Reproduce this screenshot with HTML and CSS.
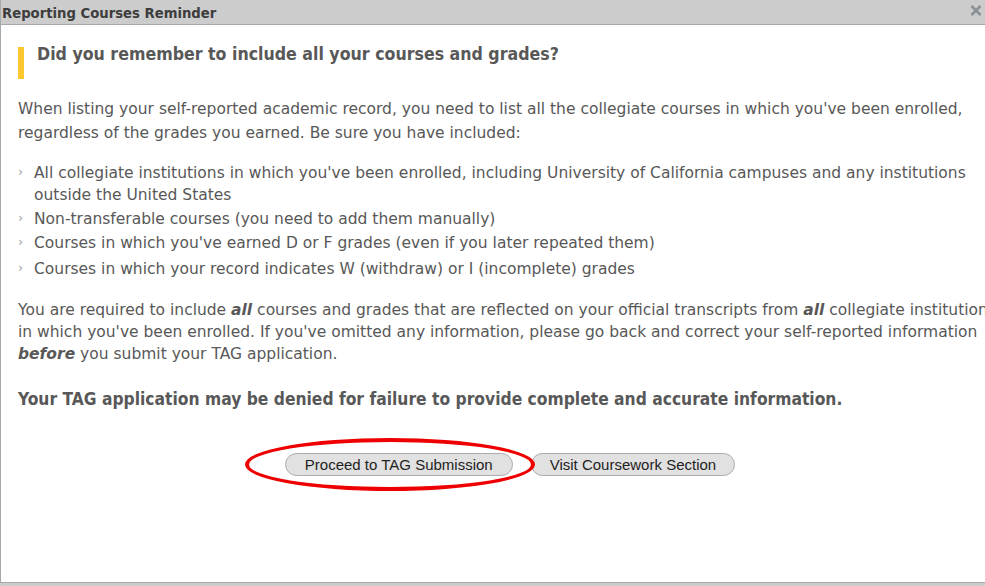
FILE: index.html
```html
<!DOCTYPE html>
<html lang="en">
<head>
    <meta charset="UTF-8">
    <title>Reporting Courses Reminder</title>
    <link rel="stylesheet" href="styles.css">
</head>
<body>
    <div class="dialog">
        <div class="titlebar">
            <span class="title">Reporting Courses Reminder</span>
            <svg class="close" width="12" height="11" viewBox="0 0 12 11">
                <path d="M1.5 1 L10.5 10 M10.5 1 L1.5 10" stroke="#8a9093" stroke-width="2.6" fill="none"/>
            </svg>
        </div>

        <div class="content">
            <div class="text">
                <h2 class="callout">Did you remember to include all your courses and grades?</h2>

                <p>When listing your self-reported academic record, you need to list all the collegiate courses in which you've been enrolled, regardless of the grades you earned. Be sure you have included:</p>

                <ul class="checklist">
                    <li>All collegiate institutions in which you've been enrolled, including University of California campuses and any institutions outside the United States</li>
                    <li>Non-transferable courses (you need to add them manually)</li>
                    <li>Courses in which you've earned D or F grades (even if you later repeated them)</li>
                    <li>Courses in which your record indicates W (withdraw) or I (incomplete) grades</li>
                </ul>

                <p class="tight">You are required to include <em>all</em> courses and grades that are reflected on your official transcripts from <em>all</em> collegiate institutions in which you've been enrolled. If you've omitted any information, please go back and correct your self-reported information <em>before</em> you submit your TAG application.</p>

                <p class="warning">Your TAG application may be denied for failure to provide complete and accurate information.</p>

                <div class="actions">
                    <span class="circled">
                        <button type="button">Proceed to TAG Submission</button>
                        <span class="ring"></span>
                    </span>
                    <button type="button">Visit Coursework Section</button>
                </div>
            </div>
        </div>
    </div>
</body>
</html>
```

FILE: styles.css
```css
body {
    margin: 0;
    background-color: #cccccc;
    font-family: "DejaVu Sans", Verdana, sans-serif;
    overflow: hidden;
}

.dialog {
    height: 582px;
    display: flex;
    flex-direction: column;
    border-left: 1px solid #a3a9ad;
    border-bottom: 1px solid #a3a9ad;
    background-color: #fff;
    overflow: hidden;
}

.titlebar {
    height: 24px;
    flex-shrink: 0;
    background-color: #cccccc;
    border-bottom: 1px solid #a3a9ad;
    display: flex;
    align-items: center;
    justify-content: space-between;
    padding: 0 3px 0 1px;
}

.title {
    font-family: "DejaVu Sans Condensed", "DejaVu Sans", sans-serif;
    font-size: 14.7px;
    font-weight: bold;
    color: #3d3d3d;
}

.close {
    margin-top: -4px;
}

.content {
    flex: 1;
    padding-left: 17px;
    color: #585858;
    font-size: 15.5px;
}

.text {
    width: 990px;
}

.callout {
    margin: 22px 0 0 0;
    padding: 0 0 18px 13px;
    border-left: 6px solid #fdc82f;
    font-family: "DejaVu Sans Condensed", "DejaVu Sans", sans-serif;
    font-size: 17.6px;
    line-height: 14px;
    color: #585858;
}

p {
    margin: 18px 0 0 0;
    line-height: 24px;
}

.checklist {
    list-style: none;
    margin: 17px 0 0 0;
    padding: 0;
}

.checklist li {
    position: relative;
    padding-left: 16px;
    line-height: 22px;
    margin-bottom: 2px;
}

.checklist li:last-child {
    margin-top: 4px;
    margin-bottom: 0;
}

.checklist li::before {
    content: "\203A";
    position: absolute;
    left: 0;
    top: -1px;
    color: #a0a0a0;
    font-size: 13px;
}

.tight {
    margin-top: 19px;
    line-height: 22px;
}

em {
    font-weight: bold;
    font-style: italic;
}

.warning {
    margin-top: 22px;
    font-family: "DejaVu Sans Condensed", "DejaVu Sans", sans-serif;
    font-weight: bold;
    font-size: 17.3px;
}

.actions {
    margin-top: 42px;
    display: flex;
    justify-content: center;
    gap: 18px;
    padding-right: 6px;
}

.circled {
    position: relative;
    display: inline-block;
}

.ring {
    position: absolute;
    left: -40px;
    right: -22px;
    top: -15px;
    bottom: -15px;
    border: 4px solid #ee0000;
    border-radius: 50%;
    box-sizing: border-box;
}

button {
    font-family: "Liberation Sans", Arial, sans-serif;
    font-size: 15px;
    color: #1e1e1e;
    background-color: #e1e1e1;
    border: 1px solid #acacac;
    border-radius: 12px;
    height: 23px;
    padding: 0 18px;
    display: block;
}

.circled button {
    padding: 0 19px;
}
```
